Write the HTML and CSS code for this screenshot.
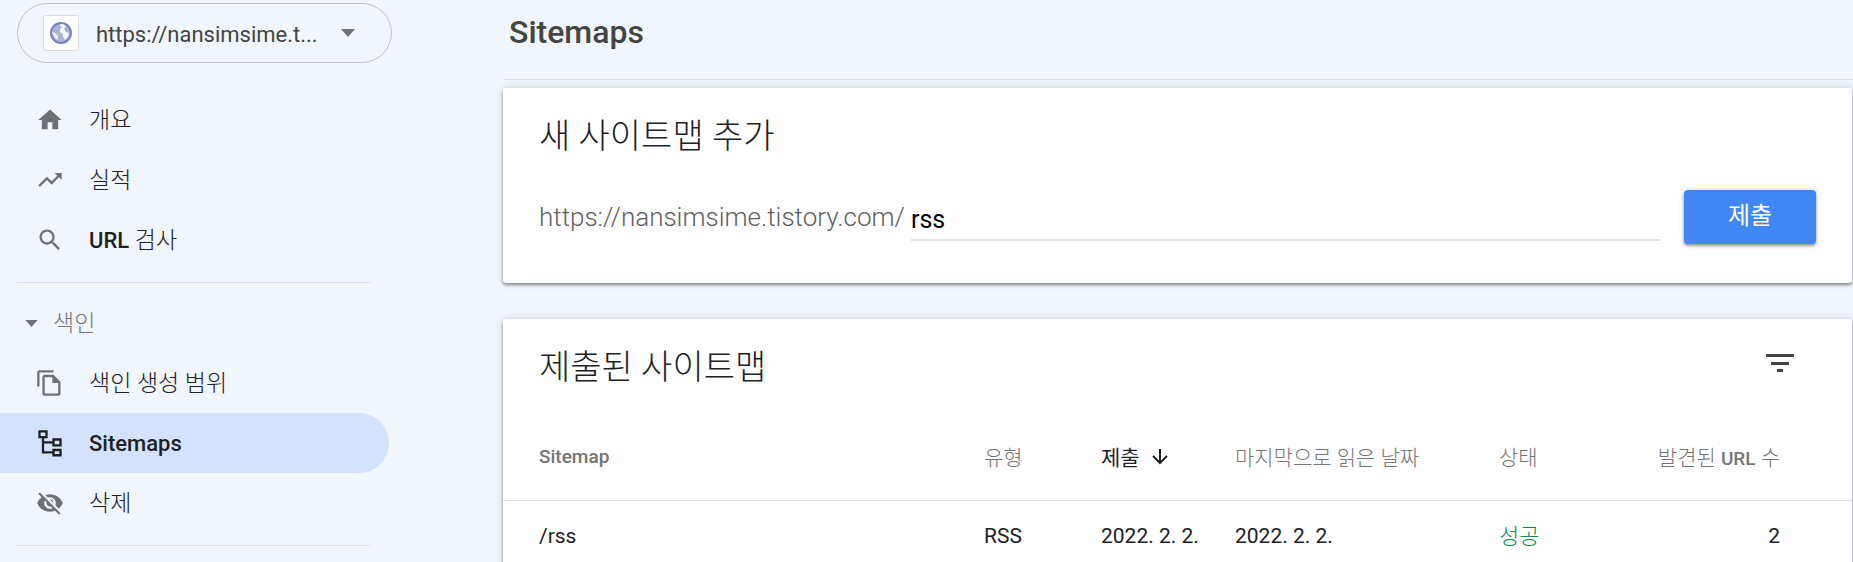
FILE: index.html
```
<!DOCTYPE html>
<html lang="ko">
<head>
  <meta charset="UTF-8" />
  <meta name="viewport" content="width=device-width, initial-scale=1.0" />
  <title>Sitemaps</title>
  <link rel="stylesheet" href="styles.css">
</head>
<body>
  <div class="app">
    <aside class="sidebar">
      <div class="property">
        <span class="favicon">
          <svg viewBox="0 0 24 24" width="24" height="24" aria-hidden="true">
            <circle cx="12" cy="12" r="10" fill="#a9b3d6" stroke="#7781bb" stroke-width="2" />
            <path fill="#f4f6fb" d="M10 4l4-1 3 2-2 3 2 3 3 1-1 4-3 3-2-3 0-3-3-2 0-3 2-2zM3 11l3 1 3 3 0 4-3-2z" />
          </svg>
        </span>
        <select class="property-select" aria-label="속성">
          <option>https://nansimsime.t...</option>
        </select>
        <svg class="caret" viewBox="0 0 14 8" width="14" height="8" aria-hidden="true"><path d="M0 0h14L7 8z" /></svg>
      </div>

      <nav class="nav">
        <a class="nav-item" href="#">
          <svg class="icon" viewBox="0 0 24 24"><path d="M10 20v-6h4v6h5v-8h3L12 3 2 12h3v8z" /></svg>
          <span class="label">개요</span>
        </a>
        <a class="nav-item" href="#">
          <svg class="icon" viewBox="0 0 24 24"><path d="M16 6l2.29 2.29-4.88 4.88-4-4L2 16.59 3.41 18l6-6 4 4 6.3-6.29L22 12V6z" /></svg>
          <span class="label">실적</span>
        </a>
        <a class="nav-item" href="#">
          <svg class="icon" viewBox="0 0 24 24"><path d="M15.5 14h-.79l-.28-.27C15.41 12.59 16 11.11 16 9.5 16 5.91 13.09 3 9.5 3S3 5.91 3 9.5 5.91 16 9.5 16c1.61 0 3.09-.59 4.23-1.57l.27.28v.79l5 4.99L20.49 19l-4.99-5zm-6 0C7.01 14 5 11.99 5 9.5S7.01 5 9.5 5 14 7.01 14 9.5 11.99 14 9.5 14z" /></svg>
          <span class="label"><span class="latin">URL</span> 검사</span>
        </a>
      </nav>

      <nav class="nav">
        <button class="nav-group" type="button">
          <svg class="caret" viewBox="0 0 14 8" width="13" height="7" aria-hidden="true"><path d="M0 0h14L7 8z" /></svg>
          <span class="label">색인</span>
        </button>
        <a class="nav-item" href="#">
          <svg class="icon" viewBox="0 0 24 24"><path d="M16 1H4C2.900 1 2 1.900 2 3v12h2V3h12zM9 5h7l6 6v10c0 1.100-.9 2-2 2H8.500C7.400 23 6.500 22.100 6.500 21V7c0-1.100.9-2 2-2zm-.5 2v14H20v-9h-5V7z" transform="translate(-1 0)" /></svg>
          <span class="label">색인 생성 범위</span>
        </a>
        <a class="nav-item active" href="#">
          <svg class="icon" viewBox="0 0 24 24"><path fill="none" stroke="currentColor" stroke-width="2" d="M3 2h6v5H3zM15 9h6v5h-6zM15 18h6v4.500h-6zM6 7v13h9M6 11.500h9" /></svg>
          <span class="latin">Sitemaps</span>
        </a>
        <a class="nav-item" href="#">
          <svg class="icon" viewBox="0 0 24 24"><path d="M12 7c2.760 0 5 2.240 5 5 0 .65-.13 1.260-.36 1.830l2.920 2.920c1.510-1.260 2.700-2.890 3.430-4.750-1.730-4.390-6-7.500-11-7.500-1.400 0-2.740.25-3.980.7l2.160 2.160C10.740 7.130 11.350 7 12 7zM2 4.270l2.280 2.280.46.46C3.080 8.300 1.780 10.020 1 12c1.730 4.390 6 7.500 11 7.500 1.550 0 3.030-.3 4.380-.84l.42.42L19.730 22 21 20.730 3.270 3zM7.530 9.800l1.550 1.550c-.05.21-.08.43-.08.65 0 1.660 1.340 3 3 3 .22 0 .44-.03.65-.08l1.550 1.550c-.67.33-1.410.53-2.200.53-2.760 0-5-2.240-5-5 0-.79.2-1.530.53-2.200zm4.310-.78l3.150 3.150.02-.16c0-1.660-1.340-3-3-3z" /></svg>
          <span class="label">삭제</span>
        </a>
      </nav>
    </aside>

    <main class="main">
      <header class="page-header">
        <h1>Sitemaps</h1>
      </header>

      <section class="card add-card">
        <h2>새 사이트맵 추가</h2>
        <form class="add-form">
          <label for="path">https://nansimsime.tistory.com/</label>
          <input type="text" id="path" value="rss" />
          <button class="submit" type="button">제출</button>
        </form>
      </section>

      <section class="card">
        <div class="card-header">
          <h2>제출된 사이트맵</h2>
          <button class="filter" type="button" aria-label="필터">
            <svg viewBox="0 0 28 18" width="28" height="18"><path d="M0 0h28v3H0zM5 8h18v3H5zM11 15h6v3h-6z" /></svg>
          </button>
        </div>
        <table>
          <thead>
            <tr>
              <th class="col-name"><span class="latin">Sitemap</span></th>
              <th class="col-type">유형</th>
              <th class="col-sent">
                제출
                <svg viewBox="0 0 16 16" width="16" height="16" aria-hidden="true"><path d="M8 0v14M1 7l7 7 7-7" /></svg>
              </th>
              <th class="col-read">마지막으로 읽은 날짜</th>
              <th class="col-status">상태</th>
              <th class="col-count">발견된 <span class="latin">URL</span> 수</th>
            </tr>
          </thead>
          <tbody>
            <tr>
              <td>/rss</td>
              <td>RSS</td>
              <td>2022. 2. 2.</td>
              <td>2022. 2. 2.</td>
              <td class="success">성공</td>
              <td class="col-count">2</td>
            </tr>
          </tbody>
        </table>
      </section>
    </main>
  </div>
</body>
</html>
```

FILE: styles.css
```
:root {
  --bg-color: #f1f5fc;
  --text-color: #202124;
  --muted: #757575;
  --icon: #6f7174;
  --line: #e0e0e0;
  --accent: #4285f4;
}
* {
  box-sizing: border-box;
}
body {
  margin: 0;
  background: var(--bg-color);
  color: var(--text-color);
  font-family: Roboto, "Noto Sans CJK KR", sans-serif;
}
button,
input,
select {
  font-family: inherit;
  border: none;
  background: none;
  padding: 0;
}
h1,
h2 {
  margin: 0;
}
.app {
  display: flex;
  height: 100vh;
  overflow: hidden;
}

/* sidebar */
.sidebar {
  flex: 0 0 392px;
  padding-top: 3px;
}
.property {
  display: flex;
  align-items: center;
  height: 60px;
  margin-left: 17px;
  padding: 0 36px 0 25px;
  border: 1px solid #c4c4c4;
  border-radius: 30px;
}
.favicon {
  display: flex;
  align-items: center;
  justify-content: center;
  width: 36px;
  height: 36px;
  background: #fff;
  border: 1px solid #dcdcdc;
  border-radius: 3px;
}
.property-select {
  flex: 1;
  min-width: 0;
  height: 40px;
  margin-left: 17px;
  padding-top: 2px;
  appearance: none;
  color: #444;
  font-size: 22px;
}
.caret {
  fill: var(--icon);
}
.nav {
  margin-right: 21px;
  margin-left: 17px;
  padding: 10px 0 12px;
  border-bottom: 1px solid var(--line);
}
.property + .nav {
  padding-top: 27px;
}
.nav-item {
  display: flex;
  align-items: center;
  gap: 25px;
  height: 60px;
  margin-left: -17px;
  padding-left: 36px;
  color: var(--text-color);
  font-size: 23px;
  font-weight: 300;
  text-decoration: none;
}
.nav-item.active {
  margin-right: -18px;
  background: #d3e3fd;
  border-radius: 0 30px 30px 0;
}
.label {
  padding-bottom: 4px;
}
.icon {
  width: 28px;
  height: 28px;
  fill: var(--icon);
}
.active .icon {
  color: var(--text-color);
}
.latin {
  font-weight: 500;
}
.nav-item .latin {
  font-size: 22px;
}
.nav-group {
  display: flex;
  align-items: center;
  gap: 15px;
  height: 60px;
  padding-left: 8px;
  color: var(--muted);
  font-size: 23px;
  font-weight: 300;
}

/* content */
.main {
  flex: 1;
  min-width: 0;
  margin-left: 111px;
}
.page-header {
  height: 80px;
  padding: 12px 6px;
  border-bottom: 1px solid var(--line);
}
h1 {
  color: #444;
  font-size: 32px;
  font-weight: 500;
  line-height: 40px;
}
h2 {
  font-size: 34px;
  font-weight: 300;
  line-height: 48px;
}
.card {
  margin: 0 1px 36px 0;
  background: #fff;
  border-radius: 3px;
  box-shadow: 0 2px 3px rgba(0, 0, 0, 0.4), 0 0 8px rgba(0, 0, 0, 0.15);
}
.add-card {
  margin-top: 8px;
  padding: 24px 36px 39px;
}
.add-form {
  display: flex;
  align-items: center;
  margin-top: 30px;
}
.add-form label {
  color: #606060;
  font-size: 26px;
  font-weight: 300;
}
.add-form input {
  flex: 1;
  min-width: 0;
  height: 42px;
  margin: 6px 24px 0 6px;
  border-bottom: 2px solid var(--line);
  color: #000;
  font-size: 25px;
}
.submit {
  width: 132px;
  height: 54px;
  padding-bottom: 8px;
  background: var(--accent);
  border-radius: 4px;
  box-shadow: 0 2px 3px rgba(0, 0, 0, 0.35), 0 0 6px rgba(0, 0, 0, 0.15);
  color: #fff;
  font-size: 24px;
}
.card-header {
  display: flex;
  align-items: center;
  justify-content: space-between;
  padding: 24px 58px 24px 36px;
}
.filter {
  display: flex;
  padding-bottom: 8px;
}
.filter svg {
  fill: #444;
}
table {
  width: 100%;
  table-layout: fixed;
  border-collapse: collapse;
}
th {
  height: 85px;
  padding: 0 0 2px;
  border-bottom: 1px solid var(--line);
  color: var(--muted);
  font-size: 21px;
  font-weight: 300;
  text-align: left;
  white-space: nowrap;
}
th .latin {
  font-size: 19px;
}
td {
  height: 72px;
  padding: 0;
  font-size: 21px;
}
th:first-child,
td:first-child {
  padding-left: 36px;
}
.col-type {
  width: 117px;
}
.col-sent {
  width: 134px;
  color: var(--text-color);
  font-weight: 400;
}
.col-sent svg {
  margin-left: 7px;
  fill: none;
  stroke: currentColor;
  stroke-width: 2;
}
.col-read {
  width: 264px;
}
.col-status {
  width: 118px;
}
.col-count {
  width: 235px;
  padding-right: 72px;
  text-align: right;
}
.success {
  padding-bottom: 4px;
  color: #0b8f4d;
  font-size: 22px;
  font-weight: 300;
}
```
